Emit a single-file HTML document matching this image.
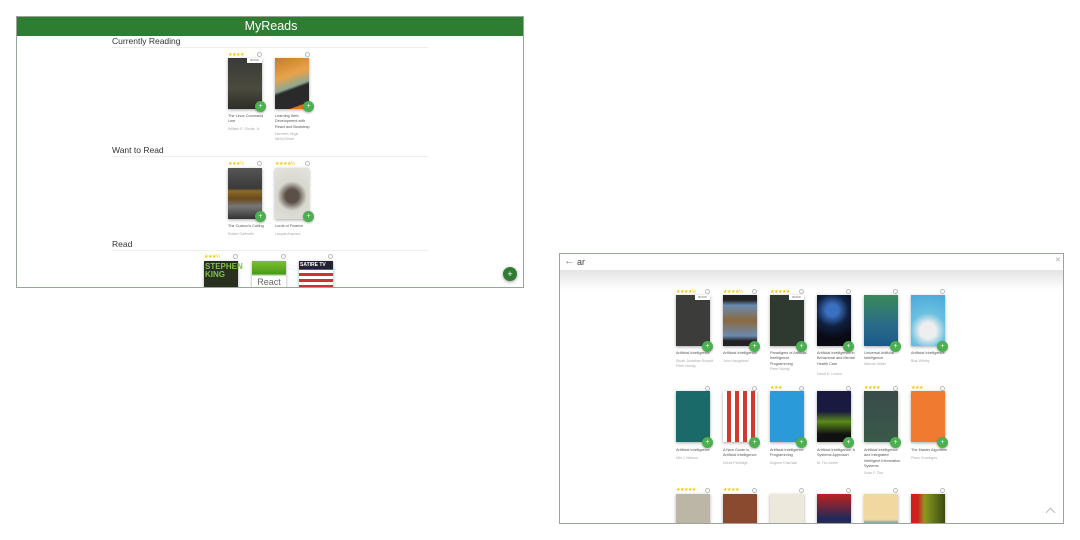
<!DOCTYPE html>
<html><head><meta charset="utf-8"><style>
*{margin:0;padding:0;box-sizing:border-box}
body{width:1080px;height:540px;background:#fff;position:relative;overflow:hidden;font-family:"Liberation Sans",sans-serif}
.fr{position:absolute;border:1px solid #9aa59a;overflow:hidden;background:#fff}
.a{position:absolute}
.h{position:absolute;left:95px;font-size:8.5px;color:#333}
.ln{position:absolute;left:95px;width:316px;height:1px;background:#eee}
.c{position:absolute;width:34px;height:51px;box-shadow:0 1px 3px rgba(0,0,0,.35)}
.st{position:absolute;font-size:5px;color:#f5c400;letter-spacing:-.5px;line-height:5px}
.i{position:absolute;width:5px;height:5px;border:1px solid #bbb;border-radius:50%}
.p{position:absolute;width:11px;height:11px;border-radius:50%;background:#4caf50;color:#fff;font-size:7px;line-height:11px;text-align:center;box-shadow:0 1px 2px rgba(0,0,0,.3)}
.t{position:absolute;width:38px;font-size:3.8px;line-height:5.3px;color:#555}
.au{position:absolute;width:38px;font-size:3.5px;line-height:5px;color:#aaa}
.tag{position:absolute;right:0;top:0;background:#fff;color:#666;font-size:3px;padding:0 3px;height:5px;line-height:5px}
</style></head><body>

<!-- LEFT FRAME -->
<div class="fr" style="left:16px;top:16px;width:508px;height:272px">
  <div class="a" style="left:0;top:0;width:508px;height:19px;background:#2e7d32;color:#fff;font-size:12.5px;text-align:center;line-height:19px">MyReads</div>
  <div class="h" style="top:19px">Currently Reading</div><div class="ln" style="top:30px"></div>
  <div class="st" style="left:211px;top:36px">★★★★</div><div class="i" style="left:240px;top:35px"></div>
  <div class="c" style="left:211px;top:41px;background:linear-gradient(#3a3a38,#4a4a3e 60%,#2e2e2a)"><div class="tag">BOOK</div></div>
  <div class="p" style="left:238px;top:84px">+</div>
  <div class="t" style="left:211px;top:97px">The Linux Command Line</div>
  <div class="au" style="left:211px;top:110px">William E. Shotts, Jr.</div>
  <div class="i" style="left:288px;top:35px"></div>
  <div class="c" style="left:258px;top:41px;background:linear-gradient(160deg,#c97a2a,#e9a24a 35%,#8fa890 55%,#2a2a2a 60%,#2a2a2a 88%,#e07a10 90%)"></div>
  <div class="p" style="left:286px;top:84px">+</div>
  <div class="t" style="left:258px;top:97px">Learning Web Development with React and Bootstrap</div>
  <div class="au" style="left:258px;top:115px">Harmeet Singh<br>Mehul Bhatt</div>

  <div class="h" style="top:128px">Want to Read</div><div class="ln" style="top:139px"></div>
  <div class="st" style="left:211px;top:145px">★★★½</div><div class="i" style="left:240px;top:144px"></div>
  <div class="c" style="left:211px;top:151px;background:linear-gradient(#555,#3a3a3a 40%,#8a6a2a 45%,#6a4a1a 60%,#777 75%,#333)"></div>
  <div class="p" style="left:238px;top:194px">+</div>
  <div class="t" style="left:211px;top:207px">The Cuckoo's Calling</div>
  <div class="au" style="left:211px;top:215px">Robert Galbraith</div>
  <div class="st" style="left:258px;top:145px">★★★★½</div><div class="i" style="left:288px;top:144px"></div>
  <div class="c" style="left:258px;top:151px;background:radial-gradient(circle at 50% 55%,#5a5048 20%,#d8d8d0 45%,#e4e4de)"></div>
  <div class="p" style="left:286px;top:194px">+</div>
  <div class="t" style="left:258px;top:207px">Lords of Finance</div>
  <div class="au" style="left:258px;top:215px">Liaquat Ahamed</div>

  <div class="h" style="top:222px">Read</div><div class="ln" style="top:233px"></div>
  <div class="st" style="left:187px;top:238px">★★★½</div><div class="i" style="left:216px;top:237px"></div>
  <div class="c" style="left:187px;top:244px;background:#2a3020"><div style="color:#7ec04a;font-size:8px;line-height:8px;padding:2px 1px;font-weight:bold">STEPHEN KING</div></div>
  <div class="i" style="left:264px;top:237px"></div>
  <div class="c" style="left:235px;top:244px;background:linear-gradient(#7cc02a,#4a9a1a 25%,#fff 30%)"><div style="color:#666;font-size:9px;padding-top:16px;text-align:center">React</div></div>
  <div class="i" style="left:311px;top:237px"></div>
  <div class="c" style="left:282px;top:244px;background:repeating-linear-gradient(#c33 0 3px,#fff 3px 6px)"><div style="background:#223;color:#fff;font-size:5px;font-weight:bold;padding:1px">SATIRE TV</div></div>

  <div class="a" style="left:486px;top:250px;width:14px;height:14px;border-radius:50%;background:#2e7d32;color:#fff;font-size:9px;line-height:14px;text-align:center;box-shadow:0 1px 3px rgba(0,0,0,.4)">+</div>
</div>

<!-- RIGHT FRAME -->
<div class="fr" style="left:559px;top:253px;width:505px;height:271px">
  <div class="a" style="left:0;top:16px;width:505px;height:20px;background:linear-gradient(#e4e4e4,#fff)"></div>
  <div class="a" style="left:0;top:0;width:505px;height:16px;background:#fff"></div>
  <div class="a" style="left:4px;top:0;font-size:11px;color:#888;line-height:14px">←</div>
  <div class="a" style="left:17px;top:1px;font-size:9px;color:#444;line-height:14px">ar</div>
  <div class="a" style="left:495px;top:2px;font-size:7px;color:#aaa">✕</div>

  <!-- row 1 -->
  <div class="st" style="left:116px;top:36px">★★★★½</div><div class="i" style="left:145px;top:35px"></div>
  <div class="c" style="left:116px;top:41px;background:#3c3c3a"><div class="tag">BOOK</div></div>
  <div class="p" style="left:142px;top:87px">+</div>
  <div class="t" style="left:116px;top:97px">Artificial Intelligence</div>
  <div class="au" style="left:116px;top:105px">Stuart Jonathan Russell<br>Peter Norvig</div>

  <div class="st" style="left:163px;top:36px">★★★★½</div><div class="i" style="left:192px;top:35px"></div>
  <div class="c" style="left:163px;top:41px;background:linear-gradient(#222 10%,#6a8ab0 20%,#8a6a40 50%,#6a8ab0 80%,#222 90%)"></div>
  <div class="p" style="left:189px;top:87px">+</div>
  <div class="t" style="left:163px;top:97px">Artificial Intelligence</div>
  <div class="au" style="left:163px;top:105px">John Haugeland</div>

  <div class="st" style="left:210px;top:36px">★★★★★</div><div class="i" style="left:239px;top:35px"></div>
  <div class="c" style="left:210px;top:41px;background:#2e3a30"><div class="tag">BOOK</div></div>
  <div class="p" style="left:236px;top:87px">+</div>
  <div class="t" style="left:210px;top:97px">Paradigms of Artificial Intelligence Programming</div>
  <div class="au" style="left:210px;top:113px">Peter Norvig</div>

  <div class="i" style="left:286px;top:35px"></div>
  <div class="c" style="left:257px;top:41px;background:radial-gradient(circle at 45% 30%,#3a70c0 15%,#102040 40%,#0a0a14 70%)"></div>
  <div class="p" style="left:283px;top:87px">+</div>
  <div class="t" style="left:257px;top:97px">Artificial Intelligence in Behavioral and Mental Health Care</div>
  <div class="au" style="left:257px;top:118px">David D. Luxton</div>

  <div class="i" style="left:333px;top:35px"></div>
  <div class="c" style="left:304px;top:41px;background:linear-gradient(#3a8a5a,#2a6a8a 60%,#1a5a8a)"></div>
  <div class="p" style="left:330px;top:87px">+</div>
  <div class="t" style="left:304px;top:97px">Universal Artificial Intelligence</div>
  <div class="au" style="left:304px;top:108px">Marcus Hutter</div>

  <div class="i" style="left:380px;top:35px"></div>
  <div class="c" style="left:351px;top:41px;background:radial-gradient(circle at 50% 70%,#eee 20%,#6ac0e0 45%,#4aa8d8)"></div>
  <div class="p" style="left:377px;top:87px">+</div>
  <div class="t" style="left:351px;top:97px">Artificial Intelligence</div>
  <div class="au" style="left:351px;top:105px">Blay Whitby</div>

  <!-- row 2 -->
  <div class="i" style="left:145px;top:132px"></div>
  <div class="c" style="left:116px;top:137px;background:#1a6a6a"></div>
  <div class="p" style="left:142px;top:183px">+</div>
  <div class="t" style="left:116px;top:194px">Artificial Intelligence</div>
  <div class="au" style="left:116px;top:202px">Nils J. Nilsson</div>

  <div class="i" style="left:192px;top:132px"></div>
  <div class="c" style="left:163px;top:137px;background:repeating-linear-gradient(90deg,#fff 0 4px,#d03a2a 4px 8px)"></div>
  <div class="p" style="left:189px;top:183px">+</div>
  <div class="t" style="left:163px;top:194px">A New Guide to Artificial Intelligence</div>
  <div class="au" style="left:163px;top:207px">Derek Partridge</div>

  <div class="st" style="left:210px;top:132px">★★★</div><div class="i" style="left:239px;top:132px"></div>
  <div class="c" style="left:210px;top:137px;background:#2a9ad8"></div>
  <div class="p" style="left:236px;top:183px">+</div>
  <div class="t" style="left:210px;top:194px">Artificial Intelligence Programming</div>
  <div class="au" style="left:210px;top:207px">Eugene Charniak</div>

  <div class="i" style="left:286px;top:132px"></div>
  <div class="c" style="left:257px;top:137px;background:linear-gradient(#1a1a40 40%,#5a8a1a 60%,#111 85%)"></div>
  <div class="p" style="left:283px;top:183px">+</div>
  <div class="t" style="left:257px;top:194px">Artificial Intelligence: A Systems Approach</div>
  <div class="au" style="left:257px;top:207px">M. Tim Jones</div>

  <div class="st" style="left:304px;top:132px">★★★★</div><div class="i" style="left:333px;top:132px"></div>
  <div class="c" style="left:304px;top:137px;background:linear-gradient(#3a4a4a,#3a5a4a)"></div>
  <div class="p" style="left:330px;top:183px">+</div>
  <div class="t" style="left:304px;top:194px">Artificial Intelligence and Integrated Intelligent Information Systems</div>
  <div class="au" style="left:304px;top:217px">Xuan F. Zha</div>

  <div class="st" style="left:351px;top:132px">★★★</div><div class="i" style="left:380px;top:132px"></div>
  <div class="c" style="left:351px;top:137px;background:#f07a30"></div>
  <div class="p" style="left:377px;top:183px">+</div>
  <div class="t" style="left:351px;top:194px">The Master Algorithm</div>
  <div class="au" style="left:351px;top:202px">Pedro Domingos</div>

  <!-- row 3 -->
  <div class="st" style="left:116px;top:234px">★★★★★</div><div class="i" style="left:145px;top:234px"></div>
  <div class="c" style="left:116px;top:240px;background:#bbb6a6"></div>
  <div class="st" style="left:163px;top:234px">★★★★</div><div class="i" style="left:192px;top:234px"></div>
  <div class="c" style="left:163px;top:240px;background:#8a4a30"></div>
  <div class="i" style="left:239px;top:234px"></div>
  <div class="c" style="left:210px;top:240px;background:#ece8dc"></div>
  <div class="i" style="left:286px;top:234px"></div>
  <div class="c" style="left:257px;top:240px;background:linear-gradient(#c02020,#1a2a5a 50%,#c02020)"></div>
  <div class="i" style="left:333px;top:234px"></div>
  <div class="c" style="left:304px;top:240px;background:linear-gradient(#f0d8a0 50%,#3a8ab0 60%)"></div>
  <div class="i" style="left:380px;top:234px"></div>
  <div class="c" style="left:351px;top:240px;background:linear-gradient(90deg,#d02020 20%,#8a9a20 40%,#3a4a10)"></div>

  <div class="a" style="left:487px;top:255px;width:7px;height:7px;border-left:1px solid #bbb;border-top:1px solid #bbb;transform:rotate(45deg)"></div>
</div>
</body></html>
